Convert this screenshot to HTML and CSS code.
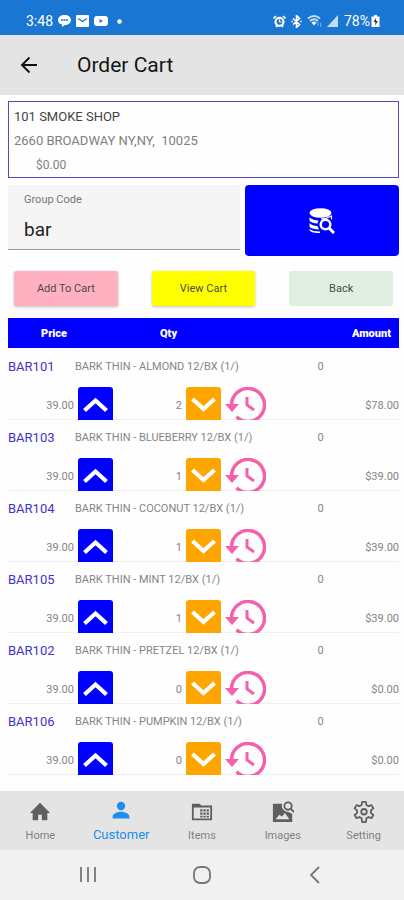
FILE: index.html
```html
<!DOCTYPE html>
<html lang="en">
<head>
<meta charset="utf-8">
<meta name="viewport" content="width=device-width, initial-scale=1">
<title>Order Cart</title>
<link rel="stylesheet" href="styles.css">
</head>
<body>
<svg class="defs" aria-hidden="true">
  <symbol id="up" viewBox="0 0 35 33"><path d="M6.500 23.500 17.500 13.500 28.500 23.500" fill="none" stroke="#fff" stroke-width="4.200"/></symbol>
  <symbol id="down" viewBox="0 0 35 33"><path d="M6.500 12 17.500 22 28.500 12" fill="none" stroke="#fff" stroke-width="4.200"/></symbol>
  <symbol id="history" viewBox="0 0 42 33">
    <path d="M7.500 18A16.500 16.500 0 1 1 12.500 29.800" fill="none" stroke="#f560ab" stroke-width="3.400"/>
    <path d="M1 17H15L8 25Z" fill="#f560ab"/>
    <path d="M23 10V18L30 23" fill="none" stroke="#f560ab" stroke-width="3"/>
  </symbol>
</svg>

<div class="status">
  <div class="status-side">
    <span>3:48</span>
    <svg width="13" height="12" viewBox="0 0 13 12"><path d="M6.500 0C10 0 13 2 13 5s-3 5-6 5l-3 2v-2.500C1.500 9 0 7.500 0 5c0-3 3-5 6.500-5Z" fill="#fff"/><path d="M3 5h7" stroke="#1976d2" stroke-width="1.500" stroke-dasharray="2 .5"/></svg>
    <svg width="13" height="12" viewBox="0 0 13 12"><rect width="13" height="12" rx="1" fill="#fff"/><path d="M2 3.500 6.500 6.500 11 3.500" fill="none" stroke="#1976d2" stroke-width="1.300"/></svg>
    <svg width="14" height="12" viewBox="0 0 14 12"><rect y="1" width="14" height="10" rx="3" fill="#fff"/><path d="M5.500 4v4l3.500-2Z" fill="#1976d2"/></svg>
    <svg class="dot" width="5" height="5" viewBox="0 0 5 5"><circle cx="2.500" cy="2.500" r="2.300" fill="#fff"/></svg>
  </div>
  <div class="status-side status-right">
    <svg width="13" height="13" viewBox="0 0 13 13"><path d="M.5 3.500 3 1M12.500 3.500 10 1M3 12l1-1.500M10 12 9 10.500" stroke="#fff" stroke-width="1.600"/><circle cx="6.500" cy="6.800" r="4" fill="none" stroke="#fff" stroke-width="2.200"/><path d="M6.500 4.500V7H8.500" fill="none" stroke="#fff"/></svg>
    <svg class="bt" width="11" height="13" viewBox="0 0 11 13"><path d="m2 3.500 6.500 6L5.500 12.500V.500l3 3-6.500 6M.300 6.500h1.500M9.200 6.500h1.500" fill="none" stroke="#fff" stroke-width="1.600"/></svg>
    <svg width="15" height="12" viewBox="0 0 15 12"><path d="M1 3.500Q7 -1.500 13 3.500M3 6Q7 2.500 11 6" fill="none" stroke="#c5dcf5" stroke-width="1.700"/><path d="m4.500 7.500q2.500-1.800 5 0L7 10.500Z" fill="#fff"/><path d="M11 7v4M13.500 8v4" stroke="#69b3ef"/></svg>
    <svg width="12" height="12" viewBox="0 0 12 12"><path d="M11 0v12H0Z" fill="#c5dcf5"/></svg>
    <span>78%</span>
    <svg class="battery" width="9" height="12" viewBox="0 0 9 12"><path d="M3 0h3v1.500h2.500V12H.5V1.500H3Z" fill="#fff"/><path d="M5 3 2.500 7h2L4 10.500 7 6H5Z" fill="#333"/></svg>
  </div>
</div>

<header class="appbar">
  <button class="plain" type="button" aria-label="Go back">
    <svg width="18" height="18" viewBox="0 0 18 18"><path d="M17 9H2M9.500 1.500 2 9l7.500 7.500" fill="none" stroke="#111" stroke-width="1.900"/></svg>
  </button>
  <h1>Order Cart</h1>
</header>

<main>
  <section class="customer">
    <p class="shop">101 SMOKE SHOP</p>
    <p>2660 BROADWAY NY,NY,&nbsp; 10025</p>
    <p class="balance">$0.00</p>
  </section>

  <form class="search">
    <div class="field">
      <label for="group">Group Code</label>
      <input id="group" type="text" value="bar">
    </div>
    <button class="find" type="button" aria-label="Search products">
      <svg width="26" height="26" viewBox="0 0 26 26"><ellipse cx="11.500" cy="5" rx="11" ry="4.800" fill="#fff"/><path d="M.5 9.500Q4 12.500 9.500 12.500L8.500 15.500Q2 15 .5 12.500ZM.5 15Q3 18 8.500 18L10 21.500Q2 21 .5 18.500ZM.5 21Q4 23.500 11 23.500V25Q2 25.500 .5 22Z" fill="#fff"/><path d="M12 10.800Q18 10.800 22.500 8v3.500" fill="none" stroke="#fff" stroke-width="1.200"/><circle cx="16.500" cy="16.500" r="4.800" fill="none" stroke="#fff" stroke-width="2.500"/><path d="m20 20 5 5" stroke="#fff" stroke-width="3"/></svg>
    </button>
  </form>

  <div class="actions">
    <button class="add" type="button">Add To Cart</button>
    <button class="view" type="button">View Cart</button>
    <button class="back" type="button">Back</button>
  </div>

  <table>
    <thead><tr><th class="h-price">Price</th><th class="h-qty">Qty</th><th class="h-amount">Amount</th></tr></thead>
    <tbody>
      <tr class="top"><td class="code">BAR101</td><td class="name">BARK THIN - ALMOND 12/BX (1/)</td><td class="stock">0</td></tr>
      <tr class="bottom"><td class="price">39.00</td><td class="step"><button class="up" type="button" aria-label="Increase"><svg><use href="#up"/></svg></button></td><td class="qty">2</td><td class="step"><button class="down" type="button" aria-label="Decrease"><svg><use href="#down"/></svg></button></td><td><button class="history" type="button" aria-label="History"><svg><use href="#history"/></svg></button></td><td class="amount">$78.00</td></tr>
    </tbody>
    <tbody>
      <tr class="top"><td class="code">BAR103</td><td class="name">BARK THIN - BLUEBERRY 12/BX (1/)</td><td class="stock">0</td></tr>
      <tr class="bottom"><td class="price">39.00</td><td class="step"><button class="up" type="button" aria-label="Increase"><svg><use href="#up"/></svg></button></td><td class="qty">1</td><td class="step"><button class="down" type="button" aria-label="Decrease"><svg><use href="#down"/></svg></button></td><td><button class="history" type="button" aria-label="History"><svg><use href="#history"/></svg></button></td><td class="amount">$39.00</td></tr>
    </tbody>
    <tbody>
      <tr class="top"><td class="code">BAR104</td><td class="name">BARK THIN - COCONUT 12/BX (1/)</td><td class="stock">0</td></tr>
      <tr class="bottom"><td class="price">39.00</td><td class="step"><button class="up" type="button" aria-label="Increase"><svg><use href="#up"/></svg></button></td><td class="qty">1</td><td class="step"><button class="down" type="button" aria-label="Decrease"><svg><use href="#down"/></svg></button></td><td><button class="history" type="button" aria-label="History"><svg><use href="#history"/></svg></button></td><td class="amount">$39.00</td></tr>
    </tbody>
    <tbody>
      <tr class="top"><td class="code">BAR105</td><td class="name">BARK THIN - MINT 12/BX (1/)</td><td class="stock">0</td></tr>
      <tr class="bottom"><td class="price">39.00</td><td class="step"><button class="up" type="button" aria-label="Increase"><svg><use href="#up"/></svg></button></td><td class="qty">1</td><td class="step"><button class="down" type="button" aria-label="Decrease"><svg><use href="#down"/></svg></button></td><td><button class="history" type="button" aria-label="History"><svg><use href="#history"/></svg></button></td><td class="amount">$39.00</td></tr>
    </tbody>
    <tbody>
      <tr class="top"><td class="code">BAR102</td><td class="name">BARK THIN - PRETZEL 12/BX (1/)</td><td class="stock">0</td></tr>
      <tr class="bottom"><td class="price">39.00</td><td class="step"><button class="up" type="button" aria-label="Increase"><svg><use href="#up"/></svg></button></td><td class="qty">0</td><td class="step"><button class="down" type="button" aria-label="Decrease"><svg><use href="#down"/></svg></button></td><td><button class="history" type="button" aria-label="History"><svg><use href="#history"/></svg></button></td><td class="amount">$0.00</td></tr>
    </tbody>
    <tbody>
      <tr class="top"><td class="code">BAR106</td><td class="name">BARK THIN - PUMPKIN 12/BX (1/)</td><td class="stock">0</td></tr>
      <tr class="bottom"><td class="price">39.00</td><td class="step"><button class="up" type="button" aria-label="Increase"><svg><use href="#up"/></svg></button></td><td class="qty">0</td><td class="step"><button class="down" type="button" aria-label="Decrease"><svg><use href="#down"/></svg></button></td><td><button class="history" type="button" aria-label="History"><svg><use href="#history"/></svg></button></td><td class="amount">$0.00</td></tr>
    </tbody>
  </table>
</main>

<nav class="tabs">
  <a href="#home"><svg viewBox="0 0 24 24"><path d="M10 21v-6h4v6h6v-8h3L12 2 1 13h3v8Z" fill="currentColor"/></svg><span>Home</span></a>
  <a href="#customer" class="active"><svg viewBox="0 0 24 24"><circle cx="12" cy="6" r="5" fill="currentColor"/><path d="M2 21v-2c0-4 6-6 10-6s10 2 10 6v2Z" fill="currentColor"/></svg><span>Customer</span></a>
  <a href="#items"><svg viewBox="0 0 24 24"><path d="M2 4h7l2 2h11v14H2Z" fill="none" stroke="currentColor" stroke-width="2"/><path d="M2 4h7l2 3H2ZM10 9h2.500v2.500H10ZM13.500 9H16v2.500h-2.500ZM17 9h2.500v2.500H17ZM10 12.500h2.500V15H10ZM13.500 12.500H16V15h-2.500ZM17 12.500h2.500V15H17ZM10 16h2.500v2H10ZM13.500 16H16v2h-2.500ZM17 16h2.500v2H17Z" fill="currentColor"/></svg><span>Items</span></a>
  <a href="#images"><svg viewBox="0 0 24 24"><path d="M1 3h10a7 7 0 0 0 7 9l4 2v9H1ZM4 20h15l-5-7-3 4-3-2Z" fill="currentColor" fill-rule="evenodd"/><circle cx="17.500" cy="5.500" r="4" fill="none" stroke="currentColor" stroke-width="2"/><path d="m20 8 4 4" stroke="currentColor" stroke-width="2"/></svg><span>Images</span></a>
  <a href="#setting"><svg viewBox="0 0 24 24"><path d="M10 1h4l.6 3.300 2.400 1.400 3.200-1.200 2 3.500-2.600 2.200v2.800l2.600 2.200-2 3.500-3.200-1.200-2.400 1.400L14 23h-4l-.6-4.100L7 17.500l-3.200 1.200-2-3.500L4.400 13v-2.800L1.800 8l2-3.500L7 5.700l2.400-1.400Z" fill="none" stroke="currentColor" stroke-width="2" stroke-linejoin="round"/><circle cx="12" cy="11.700" r="3" fill="none" stroke="currentColor" stroke-width="2"/></svg><span>Setting</span></a>
</nav>

<div class="system">
  <button class="plain" type="button" aria-label="Recent apps"><svg width="18" height="18" viewBox="0 0 18 18"><path d="M2 1v15M9 1v15M16 1v15" stroke="#777" stroke-width="1.800"/></svg></button>
  <button class="plain" type="button" aria-label="Home screen"><svg width="18" height="18" viewBox="0 0 18 18"><rect x="1" y="1" width="16" height="16" rx="6" fill="none" stroke="#777" stroke-width="1.800"/></svg></button>
  <button class="plain" type="button" aria-label="Back"><svg width="18" height="18" viewBox="0 0 18 18"><path d="M12 1 4 9l8 8" fill="none" stroke="#777" stroke-width="1.800"/></svg></button>
</div>
</body>
</html>
```
FILE: styles.css
```css
* {
  box-sizing: border-box;
}

body {
  margin: 0;
  min-height: 100vh;
  display: flex;
  flex-direction: column;
  background: #fefefe;
  color: #777;
  font-family: Roboto, "Liberation Sans", sans-serif;
  font-size: 12px;
}

button,
input {
  font: inherit;
  border: 0;
  padding: 0;
}

svg {
  display: block;
  flex: none;
}

.defs {
  position: absolute;
  width: 0;
  height: 0;
}

.plain {
  background: none;
}

.status {
  height: 35px;
  padding: 7px 24px 0 26px;
  display: flex;
  align-items: center;
  justify-content: space-between;
  background: #1976d2;
  color: #fff;
  font-size: 14px;
}

.status-side {
  display: flex;
  align-items: center;
  gap: 5px;
}

.dot {
  margin-left: 4px;
}

.battery {
  margin-left: -4px;
}

.appbar {
  height: 60px;
  padding: 0 20px;
  display: flex;
  align-items: center;
  gap: 39px;
  background: #e4e4e4;
}

.appbar h1 {
  margin: 0;
  color: #151515;
  font-size: 21px;
  font-weight: 400;
}

main {
  flex: 1;
  padding: 6px 5px 14px 8px;
}

.customer {
  height: 77px;
  padding: 3px 5px;
  border: 1px solid #5149c4;
}

.customer p {
  margin: 0;
  line-height: 24px;
  font-size: 13px;
  color: #808080;
}

.customer .shop {
  color: #444;
}

.customer .balance {
  padding-left: 22px;
  font-size: 12px;
}

.search {
  margin-top: 7px;
  display: grid;
  grid-template-columns: 3fr 2fr;
  gap: 5px;
}

.field {
  height: 65px;
  padding: 8px 16px 0;
  border-bottom: 1px solid #999;
  background: #f5f5f5;
}

.field label {
  display: block;
  line-height: 14px;
  font-size: 11px;
}

.field input {
  width: 100%;
  height: 32px;
  margin-top: 6px;
  background: none;
  color: #222;
  font-size: 19px;
}

.find {
  height: 71px;
  display: grid;
  place-items: center;
  border-radius: 4px;
  background: #00f;
}

.actions {
  margin-top: 15px;
  padding: 0 6px;
  display: grid;
  grid-template-columns: repeat(3, 1fr);
  gap: 34px;
}

.actions button {
  height: 35px;
  border-radius: 2px;
  color: #4a4a4a;
  font-size: 11px;
  box-shadow: 0 1px 3px rgba(0, 0, 0, 0.25);
}

.actions .add {
  background: #ffb0c1;
}

.actions .view {
  background: #ff0;
}

.actions .back {
  background: #e1efe2;
  box-shadow: none;
}

table {
  display: block;
  margin-top: 12px;
}

thead,
tbody {
  display: block;
}

thead {
  margin-bottom: 3px;
  background: #00f;
  color: #fff;
  font-size: 11px;
}

th,
td {
  padding: 0;
}

tr {
  display: flex;
  align-items: center;
}

thead tr {
  height: 30px;
  padding: 0 8px 0 33px;
}

th {
  text-align: left;
  font-weight: 900;
}

.h-price {
  width: 34%;
}

.h-amount {
  margin-left: auto;
}

tbody {
  height: 71px;
  color: #858585;
  font-size: 11px;
}

.top {
  height: 36px;
  padding-bottom: 5px;
}

.code {
  width: 67px;
  color: #3e33cc;
  font-size: 13px;
}

.name {
  width: 62%;
}

.bottom {
  height: 33px;
  border-bottom: 1px solid #f0f0f0;
}

.price,
.qty,
.amount {
  padding-top: 4px;
  text-align: right;
}

.price {
  width: 66px;
  margin-right: 4px;
}

.qty {
  width: 69px;
  margin-right: 4px;
}

.bottom .amount {
  margin-left: auto;
}

.bottom button {
  display: block;
  height: 33px;
}

.bottom button svg {
  width: 100%;
  height: 33px;
}

.up,
.down {
  width: 35px;
  border-radius: 3px 3px 0 0;
}

.up {
  background: #00f;
}

.down {
  background: #ffa500;
}

.history {
  width: 42px;
  margin-left: 3px;
  background: none;
}

.tabs {
  height: 59px;
  padding-top: 10px;
  display: grid;
  grid-template-columns: repeat(5, 1fr);
  background: #e4e4e4;
}

.tabs a {
  display: flex;
  flex-direction: column;
  align-items: center;
  gap: 4px;
  color: #5f5f5f;
  font-size: 11px;
  line-height: 18px;
  text-decoration: none;
}

.tabs a span {
  color: #808080;
}

.tabs svg {
  width: 22px;
  height: 22px;
}

.tabs .active,
.tabs .active span {
  color: #1e8cf0;
  font-size: 13px;
}

.tabs .active svg {
  width: 20px;
  height: 20px;
  margin-bottom: 1px;
}

.system {
  height: 50px;
  padding: 0 31px;
  display: grid;
  grid-template-columns: repeat(3, 1fr);
  place-items: center;
  background: #f1f1f1;
}
```
